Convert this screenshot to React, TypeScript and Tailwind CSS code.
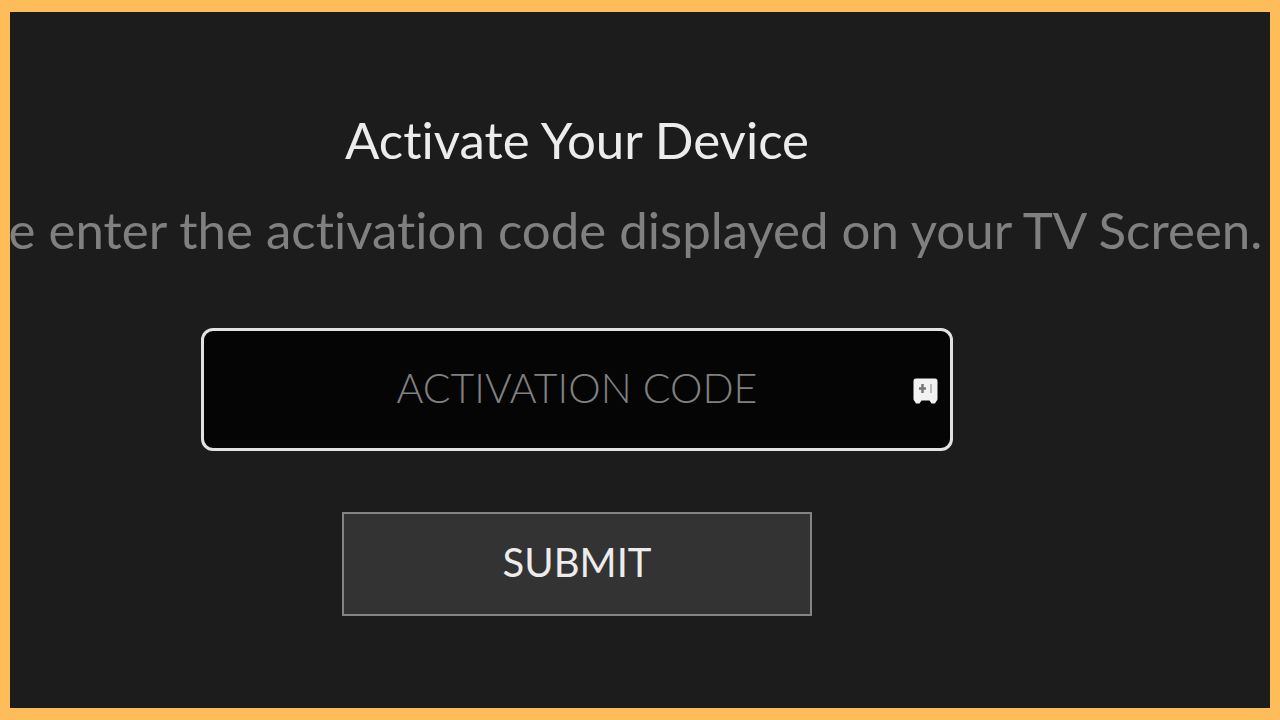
export default function App() {
  return (
    <div className="min-h-screen bg-[#ffbd59] px-2.5 py-3 font-['Lato','Open_Sans',sans-serif] [font-variant-ligatures:none]">
      <main className="flex min-h-[calc(100vh-24px)] flex-col items-center overflow-hidden bg-[#1c1c1c] pt-24 pr-[126px]">
        <h1 className="text-[51px] leading-[64px] whitespace-nowrap text-[#ececec]">
          Activate Your Device
        </h1>
        <p className="mt-[26px] text-[51px] leading-[64px] whitespace-nowrap text-[#808080]">
          Please enter the activation code displayed on your TV Screen.
        </p>
        <form
          className="mt-[66px] flex w-full max-w-[752px] flex-col items-center"
          onSubmit={(event) => event.preventDefault()}
        >
          <div className="relative w-full">
            <input
              type="text"
              aria-label="Activation code"
              placeholder="ACTIVATION CODE"
              className="block h-[123px] w-full rounded-xl border-3 border-[#e2e2e2] bg-[#050505] px-12 pb-1 text-center text-[41px] font-light text-[#ececec] outline-none placeholder:text-[#808080]"
            />
            <svg
              aria-hidden="true"
              viewBox="0 0 26 28"
              className="absolute top-[50px] right-3.5 h-7 w-[26px]"
            >
              <path
                d="M3 0.5H22Q24.5 0.5 24.5 3V21Q24.5 22.500 23.500 23L22 25.5H18.500L16.500 22.5H8.500L6.500 25.5H3L1.500 23Q0.500 22.500 0.500 21V3Q0.500 0.500 3 0.500Z"
                fill="#f2f2f2"
              />
              <path d="M9.500 6V15M6 10.500H13" stroke="#777" strokeWidth="2.500" />
              <path d="M18 6V15" stroke="#bcbcbc" strokeWidth="2" />
            </svg>
          </div>
          <button
            type="submit"
            className="mt-[61px] h-[104px] w-full max-w-[470px] border-2 border-[#848484] bg-[#333333] pb-1 text-[40px] text-[#ececec]"
          >
            SUBMIT
          </button>
        </form>
      </main>
    </div>
  );
}
